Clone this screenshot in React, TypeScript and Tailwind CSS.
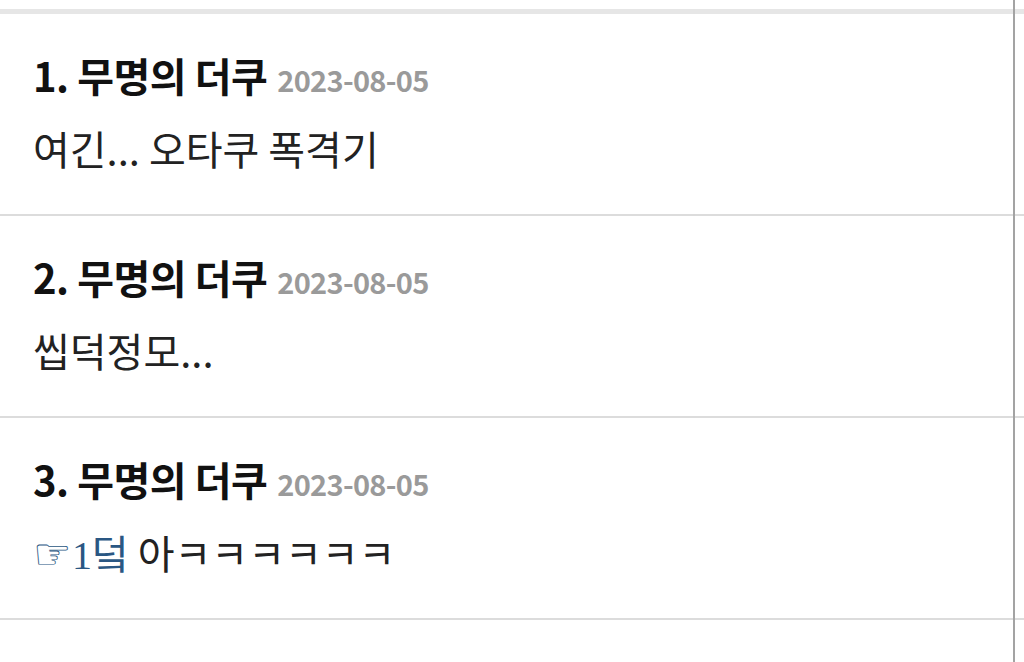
const comments = [
  { no: 1, body: <>여긴... 오타쿠 폭격기</> },
  { no: 2, body: <>씹덕정모...</> },
  {
    no: 3,
    body: (
      <>
        <span className="text-[43px] text-[#2a5783]" style={{ fontFamily: '"DejaVu Serif", serif' }}>
          ☞
        </span>
        <span
          className="text-[#2a5783]"
          style={{ fontFamily: '"Liberation Serif", "Noto Sans CJK KR", serif' }}
        >
          1
        </span>
        <span className="text-[#2a5783]">덬</span> 아ㅋㅋㅋㅋㅋㅋ
      </>
    ),
  },
];

export default function App() {
  return (
    <div
      className="relative min-h-[662px] overflow-hidden bg-white"
      style={{ fontFamily: '"Noto Sans CJK KR", "Noto Sans", sans-serif' }}
    >
      <div className="h-[9px]" />
      <div className="h-[5px] bg-[#e6e6e6]" />

      {comments.map((c) => (
        <div key={c.no} className="h-[202px] border-b-2 border-[#dcdcdc] pl-[33px] pt-[37px]">
          <div className="flex h-[48px] items-baseline">
            <span className="text-[40px] leading-[48px] font-bold tracking-[-0.5px] text-[#111]">
              {c.no}. 무명의 더쿠
            </span>
            <span className="ml-[10px] text-[29px] leading-[48px] font-bold tracking-[-0.7px] text-[#9a9a9a]">
              2023-08-05
            </span>
          </div>
          <div className="mt-[25px] h-[48px] whitespace-nowrap text-[40px] leading-[48px] text-[#222]">
            {c.body}
          </div>
        </div>
      ))}

      {/* edge line on the right */}
      <div className="absolute top-0 bottom-0 left-[1013px] w-[2px] bg-[#a3a3a3]" />
    </div>
  );
}
